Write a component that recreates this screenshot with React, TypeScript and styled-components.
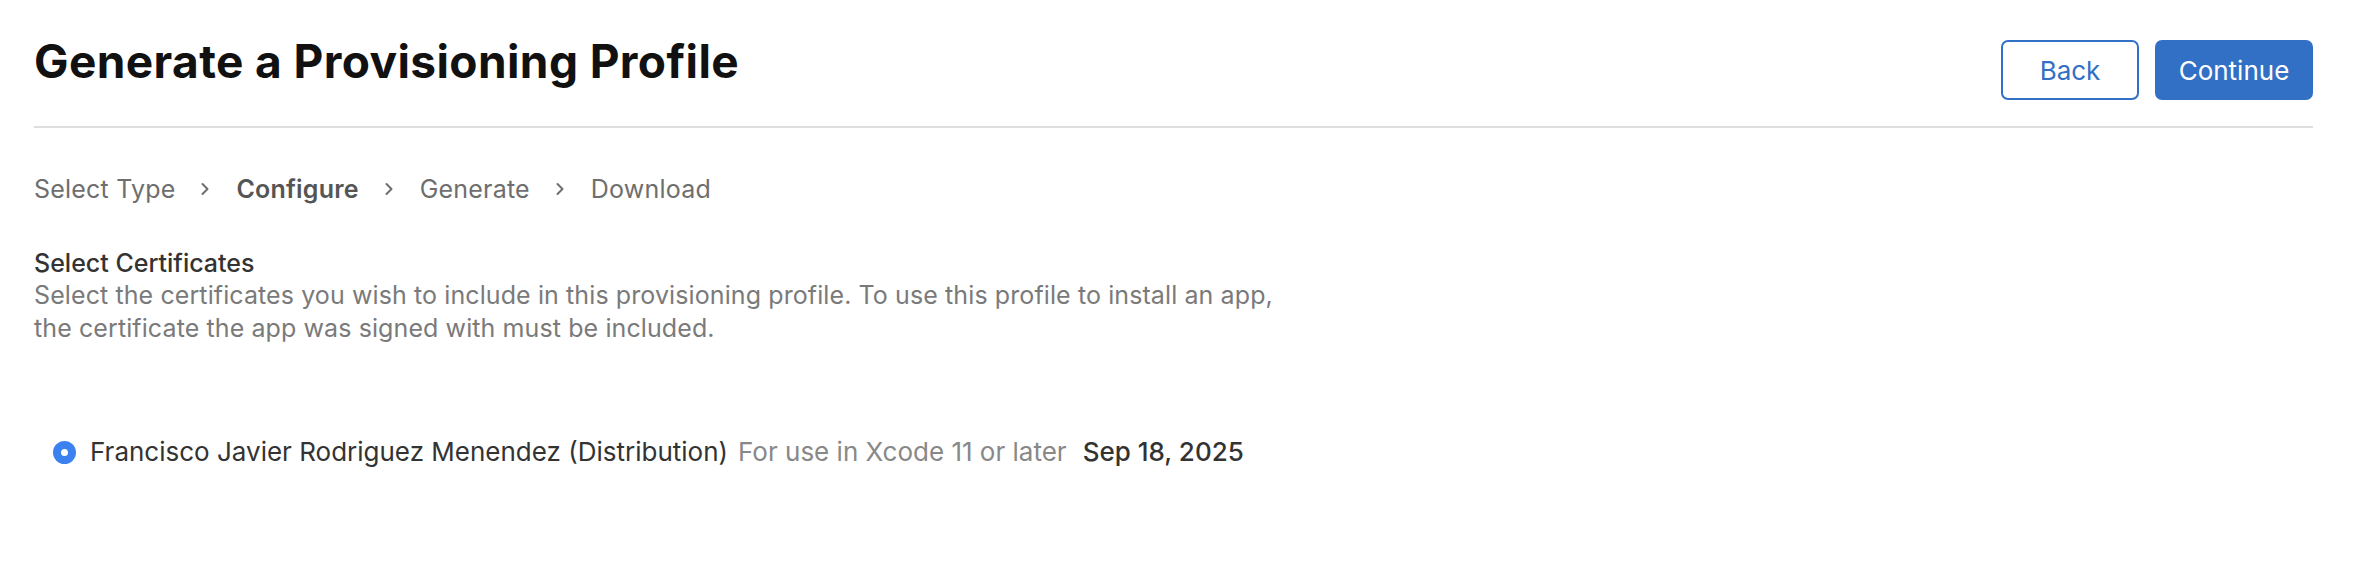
import { FC } from 'react';
import styled, { createGlobalStyle } from 'styled-components';

const steps = [
    { label: 'Select Type', active: false },
    { label: 'Configure', active: true },
    { label: 'Generate', active: false },
    { label: 'Download', active: false },
];

const GlobalStyle = createGlobalStyle`
    html, body {
        margin: 0;
        padding: 0;
        background: #fff;
    }
    body {
        font-family: Inter, "Noto Sans", "Liberation Sans", sans-serif;
        -webkit-font-smoothing: antialiased;
    }
`;

const Chevron: FC = () => (
    <svg width="10" height="16" viewBox="0 0 10 16" fill="none">
        <path d="M2.5 3l5 5-5 5" stroke="#6e6e6e" strokeWidth="2" strokeLinecap="round" strokeLinejoin="round" />
    </svg>
);

const App: FC = () => {
    return (
        <>
            <GlobalStyle />
            <SPage>
                <SHeader>
                    <STitle>Generate a Provisioning Profile</STitle>
                    <SActions>
                        <SButton $width={138}>Back</SButton>
                        <SButton $width={158} $primary>Continue</SButton>
                    </SActions>
                </SHeader>
                <SSteps>
                    {steps.map((s, i) => (
                        <SStepItem key={s.label}>
                            {i > 0 && <Chevron />}
                            <SStep $active={s.active}>{s.label}</SStep>
                        </SStepItem>
                    ))}
                </SSteps>
                <SSection>
                    <SH2>Select Certificates</SH2>
                    <SDesc>
                        Select the certificates you wish to include in this provisioning profile. To use this profile to install an app, the certificate the app was signed with must be included.
                    </SDesc>
                </SSection>
                <SOption>
                    <SRadio type="radio" name="cert" defaultChecked />
                    <SName>Francisco Javier Rodriguez Menendez (Distribution)</SName>
                    <SMeta>For use in Xcode 11 or later</SMeta>
                    <SDate>Sep 18, 2025</SDate>
                </SOption>
            </SPage>
        </>
    );
};

export default App;

const SPage = styled.div`
    padding: 0 64px 0 34px;
`;
const SHeader = styled.header`
    display: flex;
    justify-content: space-between;
    align-items: flex-start;
    padding-top: 40px;
    padding-bottom: 26px;
    border-bottom: 2px solid #dedede;
`;
const STitle = styled.h1`
    margin: 0;
    margin-top: -2px;
    font-size: 46px;
    line-height: 46px;
    font-weight: 700;
    color: #111;
    letter-spacing: 0.4px;
`;
const SActions = styled.div`
    display: flex;
    gap: 16px;
`;
const SButton = styled.button<{ $primary?: boolean; $width: number }>`
    box-sizing: border-box;
    height: 60px;
    width: ${(p) => p.$width}px;
    padding: 0;
    border-radius: 7px;
    border: 2px solid #3270c5;
    background: ${(p) => (p.$primary ? '#3270c5' : '#fff')};
    color: ${(p) => (p.$primary ? '#fff' : '#3270c5')};
    font-family: inherit;
    font-size: 26px;
    font-weight: 400;
    cursor: pointer;
`;
const SSteps = styled.nav`
    display: flex;
    align-items: center;
    margin-top: 46px;
    height: 30px;
`;
const SStepItem = styled.div`
    display: flex;
    align-items: center;
    gap: 26px;
    margin-right: 25px;
`;
const SStep = styled.span<{ $active: boolean }>`
    font-size: 25px;
    line-height: 30px;
    letter-spacing: 0.2px;
    color: ${(p) => (p.$active ? '#555' : '#6e6e6e')};
    font-weight: ${(p) => (p.$active ? 600 : 400)};
`;
const SSection = styled.section`
    margin-top: 44px;
    max-width: 1265px;
`;
const SH2 = styled.h2`
    margin: 0;
    font-size: 25px;
    line-height: 31px;
    font-weight: 500;
    color: #333;
`;
const SDesc = styled.p`
    margin: 0;
    font-size: 25px;
    line-height: 33px;
    letter-spacing: 0.1px;
    color: #7a7a7a;
`;
const SOption = styled.label`
    display: flex;
    align-items: center;
    gap: 10px;
    margin-top: 92px;
    padding-left: 19px;
    font-size: 26px;
    line-height: 30px;
`;
const SRadio = styled.input`
    appearance: none;
    box-sizing: border-box;
    width: 23px;
    height: 23px;
    margin: 0 4px 0 0;
    border-radius: 50%;
    border: 8px solid #3b82f0;
    background: #fff;
`;
const SName = styled.span`
    color: #333;
`;
const SMeta = styled.span`
    color: #888;
`;
const SDate = styled.span`
    color: #333;
    font-weight: 500;
    margin-left: 6px;
`;
